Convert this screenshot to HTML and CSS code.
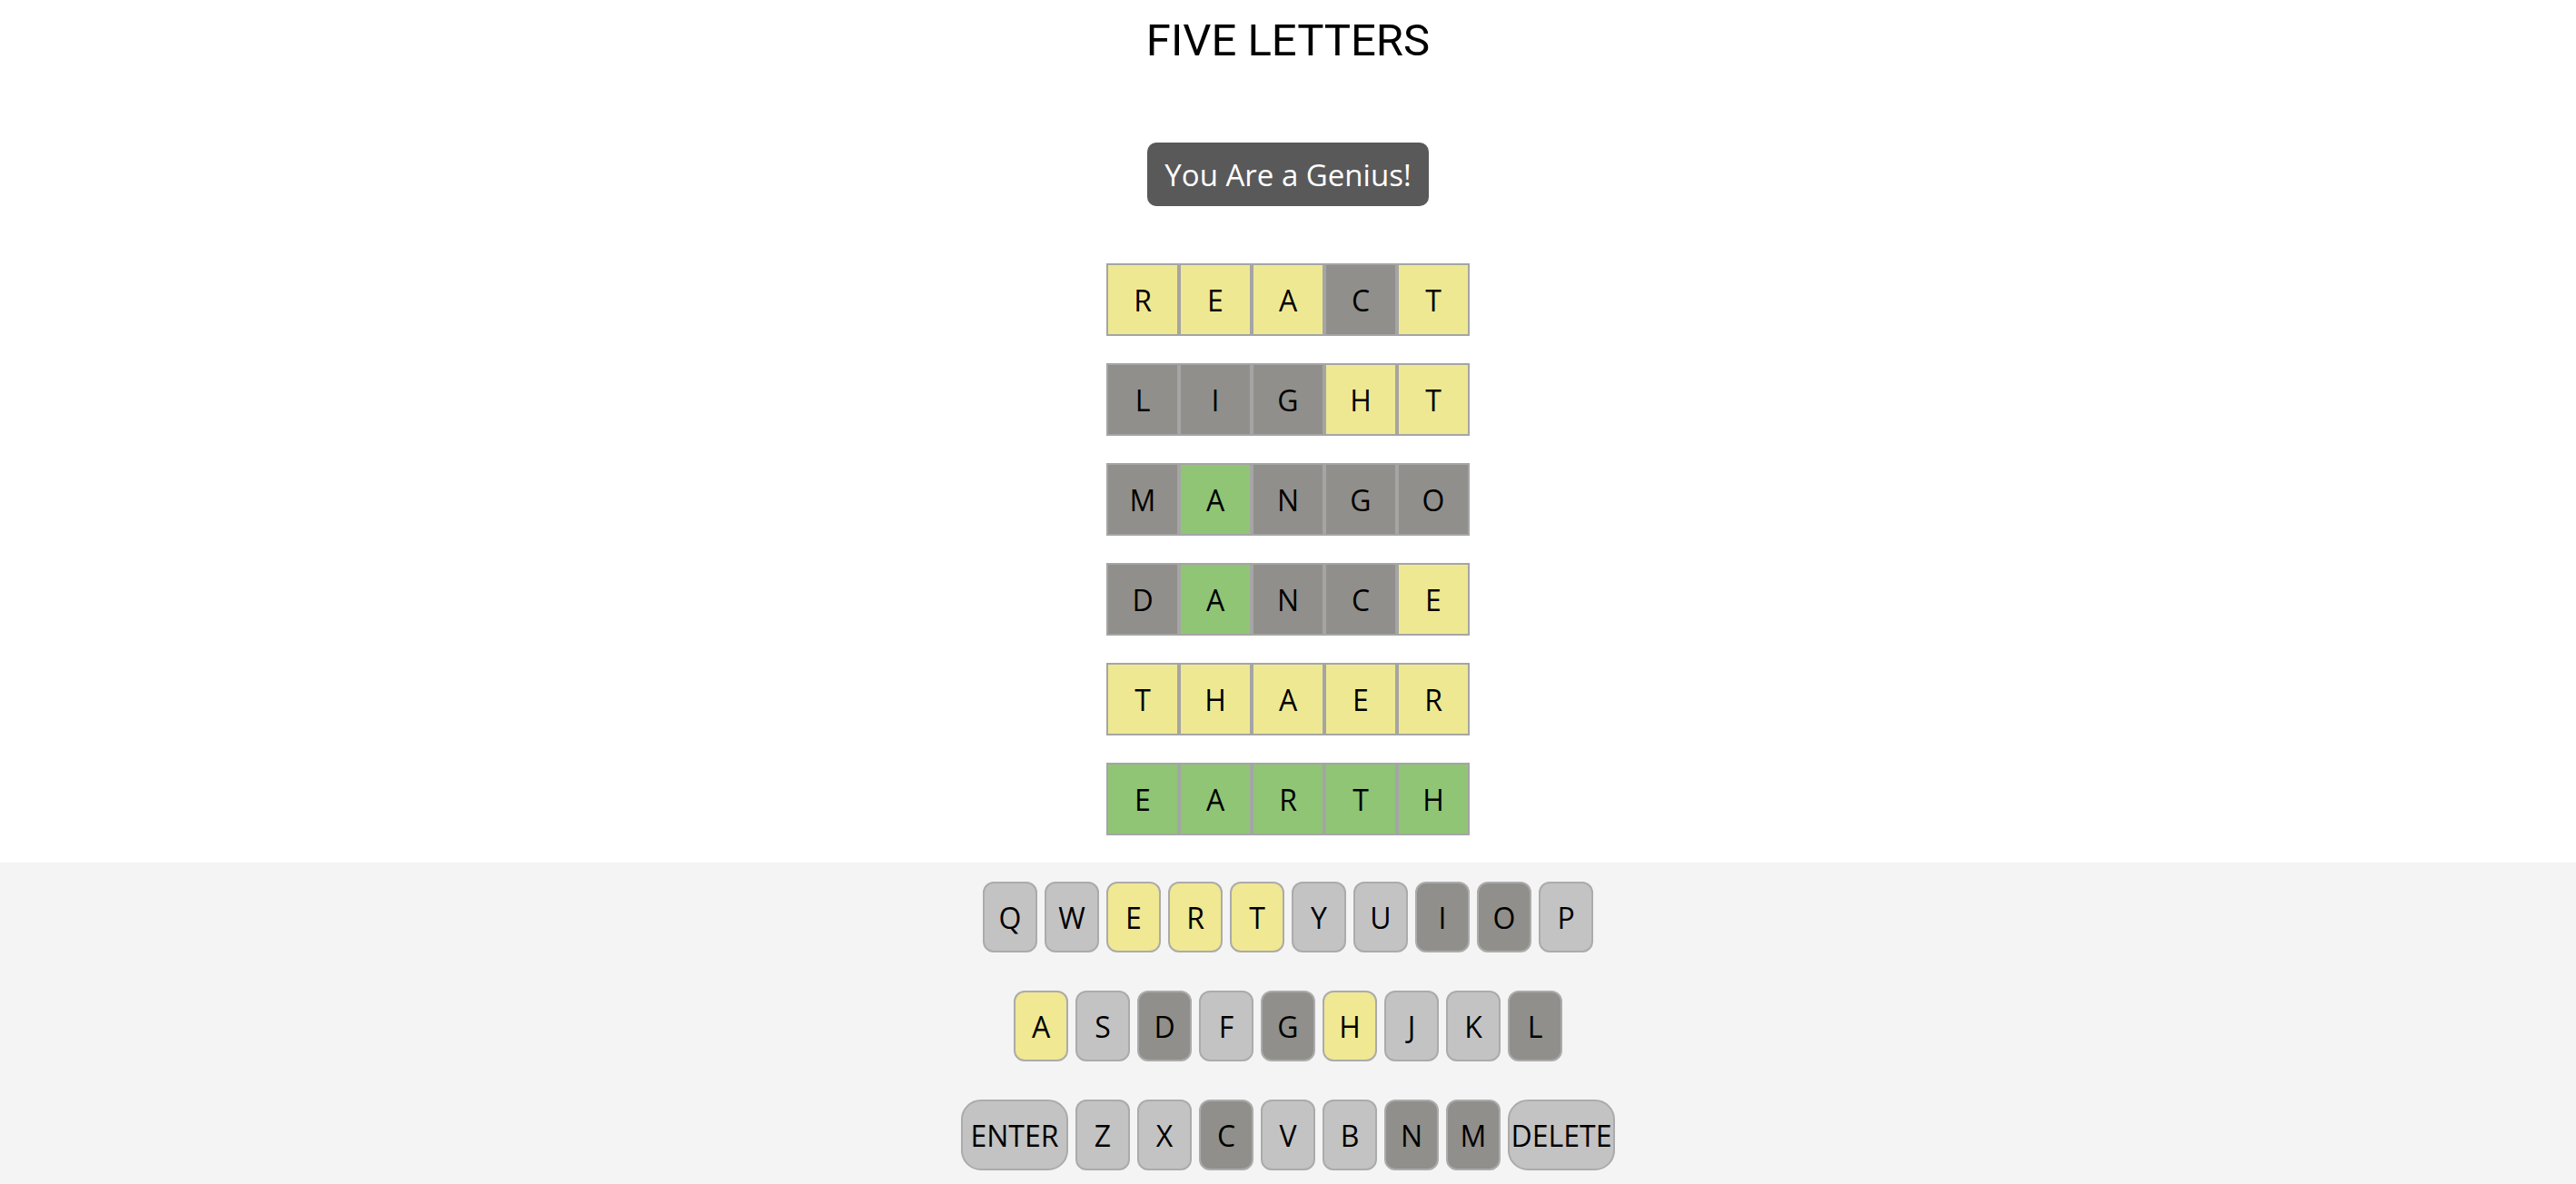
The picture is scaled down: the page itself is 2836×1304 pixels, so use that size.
FILE: index.html
```html
<!DOCTYPE html>
<html>
<head>
<meta charset="utf-8">
<link rel="stylesheet" href="styles.css">
</head>
<body>
<h1 class="title">FIVE LETTERS</h1>
<div class="toast-wrap"><div class="toast">You Are a Genius!</div></div>
<div class="board">
  <div class="row"><div class="tile y">R</div><div class="tile y">E</div><div class="tile y">A</div><div class="tile g">C</div><div class="tile y">T</div></div>
  <div class="row"><div class="tile g">L</div><div class="tile g">I</div><div class="tile g">G</div><div class="tile y">H</div><div class="tile y">T</div></div>
  <div class="row"><div class="tile g">M</div><div class="tile c">A</div><div class="tile g">N</div><div class="tile g">G</div><div class="tile g">O</div></div>
  <div class="row"><div class="tile g">D</div><div class="tile c">A</div><div class="tile g">N</div><div class="tile g">C</div><div class="tile y">E</div></div>
  <div class="row"><div class="tile y">T</div><div class="tile y">H</div><div class="tile y">A</div><div class="tile y">E</div><div class="tile y">R</div></div>
  <div class="row"><div class="tile c">E</div><div class="tile c">A</div><div class="tile c">R</div><div class="tile c">T</div><div class="tile c">H</div></div>
</div>
<div class="keyboard">
  <div class="krow">
    <div class="key">Q</div><div class="key">W</div><div class="key y">E</div><div class="key y">R</div><div class="key y">T</div><div class="key">Y</div><div class="key">U</div><div class="key d">I</div><div class="key d">O</div><div class="key">P</div>
  </div>
  <div class="krow">
    <div class="key y">A</div><div class="key">S</div><div class="key d">D</div><div class="key">F</div><div class="key d">G</div><div class="key y">H</div><div class="key">J</div><div class="key">K</div><div class="key d">L</div>
  </div>
  <div class="krow">
    <div class="key wide">ENTER</div><div class="key">Z</div><div class="key">X</div><div class="key d">C</div><div class="key">V</div><div class="key">B</div><div class="key d">N</div><div class="key d">M</div><div class="key wide">DELETE</div>
  </div>
</div>
</body>
</html>
```
FILE: styles.css
```css
html, body {
  margin: 0;
  padding: 0;
  background: #ffffff;
}
body {
  font-family: "Open Sans", "DejaVu Sans", sans-serif;
  color: #000;
}
.title {
  margin: 20px 0 0 0;
  font-family: Roboto, "Liberation Sans", sans-serif;
  font-weight: 400;
  font-size: 49px;
  line-height: 49px;
  text-align: center;
}
.toast-wrap {
  display: flex;
  justify-content: center;
  margin-top: 88px;
}
.toast {
  height: 70px;
  box-sizing: border-box;
  padding: 0 19px;
  display: flex;
  align-items: center;
  background: #595959;
  color: #ffffff;
  border-radius: 10px;
  font-size: 33px;
  font-weight: 500;
}
.board {
  display: flex;
  flex-direction: column;
  align-items: center;
  gap: 30px;
  margin-top: 63px;
}
.row {
  display: flex;
}
.tile {
  width: 80px;
  height: 80px;
  box-sizing: border-box;
  border: 2px solid #a5a5a5;
  display: flex;
  align-items: center;
  justify-content: center;
  font-size: 32px;
  font-weight: 500;
}
.tile.y { background: #efe893; }
.tile.g { background: #918f8b; }
.tile.c { background: #8fc575; }
.keyboard {
  margin-top: 30px;
  background: #f4f4f4;
  padding: 21px 0 15px;
  display: flex;
  flex-direction: column;
  align-items: center;
  gap: 42px;
}
.krow {
  display: flex;
  gap: 8px;
}
.key {
  width: 60px;
  height: 78px;
  box-sizing: border-box;
  border: 2px solid #ababab;
  border-radius: 12px;
  background: #c4c3c4;
  display: flex;
  align-items: center;
  justify-content: center;
  font-size: 32px;
  font-weight: 500;
}
.key.y { background: #f0e892; }
.key.d { background: #908f8b; }
.key.wide { width: 118px; border-radius: 22px; }
```
